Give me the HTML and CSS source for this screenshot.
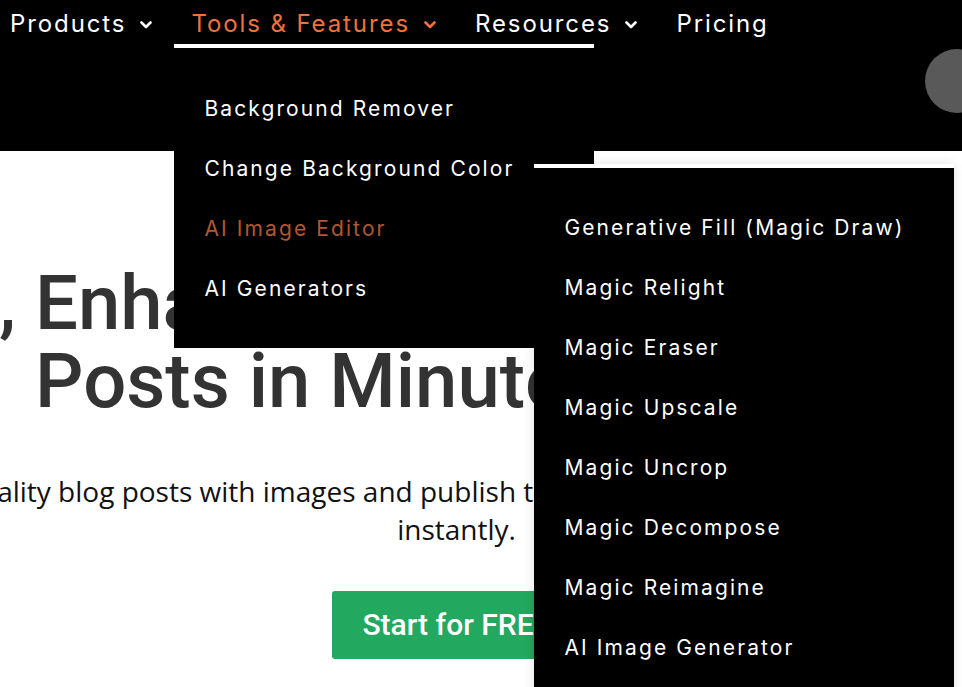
FILE: index.html
```html
<!DOCTYPE html>
<html lang="en">
<head>
<meta charset="utf-8">
<title>Blog posts in minutes</title>
<link rel="stylesheet" href="styles.css">
</head>
<body>
<header class="header">
  <nav class="nav">
    <div class="nav-item">
      <span class="nav-label">Products</span>
      <svg class="chev" viewBox="0 0 12 8" width="12" height="8"><polyline points="1.5,1.5 6,6 10.5,1.5"/></svg>
    </div>
    <div class="nav-item nav-item--active">
      <span class="nav-label">Tools &amp; Features</span>
      <svg class="chev" viewBox="0 0 12 8" width="12" height="8"><polyline points="1.5,1.5 6,6 10.5,1.5"/></svg>
      <ul class="dropdown">
        <li class="dd-item">Background Remover</li>
        <li class="dd-item">Change Background Color</li>
        <li class="dd-item dd-item--hover">AI Image Editor</li>
        <li class="dd-item">AI Generators</li>
        <li class="submenu-wrap">
          <ul class="submenu">
            <li class="dd-item">Generative Fill (Magic Draw)</li>
            <li class="dd-item">Magic Relight</li>
            <li class="dd-item">Magic Eraser</li>
            <li class="dd-item">Magic Upscale</li>
            <li class="dd-item">Magic Uncrop</li>
            <li class="dd-item">Magic Decompose</li>
            <li class="dd-item">Magic Reimagine</li>
            <li class="dd-item">AI Image Generator</li>
          </ul>
        </li>
      </ul>
    </div>
    <div class="nav-item">
      <span class="nav-label">Resources</span>
      <svg class="chev" viewBox="0 0 12 8" width="12" height="8"><polyline points="1.5,1.5 6,6 10.5,1.5"/></svg>
    </div>
    <div class="nav-item">
      <span class="nav-label">Pricing</span>
    </div>
  </nav>
  <div class="avatar"></div>
</header>
<main class="hero">
  <h1 class="title">
    <span class="title-line">Post, Enhance &amp; Publish Content for</span>
    <span class="title-line">Posts in Minutes with AI!</span>
  </h1>
  <p class="lead">
    <span class="lead-line">quality blog posts with images and publish them to your WordPress website</span>
    <span class="lead-line">instantly.</span>
  </p>
  <a class="cta" href="#">Start for FREE</a>
</main>
</body>
</html>
```
FILE: styles.css
```css
html, body {
  margin: 0;
  padding: 0;
}
body {
  width: 962px;
  height: 687px;
  overflow: hidden;
  background: #ffffff;
  font-family: "Inter", "Liberation Sans", sans-serif;
}
.header {
  height: 151px;
  background: #000000;
  display: flex;
  justify-content: space-between;
  align-items: flex-start;
  position: relative;
  z-index: 2;
}
.nav {
  display: flex;
  align-items: flex-start;
  padding-left: 10px;
}
.nav-item {
  position: relative;
  display: flex;
  align-items: center;
  gap: 14px;
  height: 48px;
  margin-right: 39px;
  color: #ffffff;
  font-size: 24px;
  letter-spacing: 1.9px;
  white-space: nowrap;
}
.nav-label {
  line-height: 48px;
}
.chev {
  fill: none;
  stroke: currentColor;
  stroke-width: 2.6;
  stroke-linecap: round;
  stroke-linejoin: round;
  margin-top: 1px;
}
.nav-item--active {
  color: #ee733a;
}
.dropdown {
  position: absolute;
  left: -17px;
  top: 44px;
  width: 420px;
  margin: 0;
  padding: 31px 0 29px;
  list-style: none;
  background: #000000;
  border-top: 4px solid #ffffff;
  box-sizing: border-box;
  letter-spacing: 0;
}
.dd-item {
  height: 60px;
  line-height: 60px;
  padding-left: 30px;
  color: #ffffff;
  font-size: 21px;
  letter-spacing: 2.1px;
}
.dd-item--hover {
  color: #b0582f;
}
.submenu-wrap {
  position: absolute;
  left: 360px;
  top: 116px;
}
.submenu {
  width: 420px;
  height: 560px;
  margin: 0;
  padding: 30px 0 0;
  list-style: none;
  background: #000000;
  border-top: 4px solid #ffffff;
  box-sizing: border-box;
  box-shadow: 0 0 10px rgba(0, 0, 0, 0.12);
}
.avatar {
  width: 64px;
  height: 64px;
  border-radius: 50%;
  background: #595959;
  margin-top: 49px;
  margin-right: -27px;
  flex: none;
}
.hero {
  width: 913px;
  display: flex;
  flex-direction: column;
  align-items: center;
}
.title {
  margin: 113px 0 0;
  display: flex;
  flex-direction: column;
  align-items: center;
  font-family: "Roboto", "Liberation Sans", sans-serif;
  font-weight: 500;
  font-size: 76px;
  line-height: 78px;
  color: #333333;
}
.title-line,
.lead-line {
  white-space: nowrap;
}
.lead {
  margin: 52px 0 0;
  display: flex;
  flex-direction: column;
  align-items: center;
  font-family: "Open Sans", "Liberation Sans", sans-serif;
  font-size: 28px;
  line-height: 38px;
  color: #111111;
}
.cta {
  margin-top: 43px;
  display: block;
  height: 68px;
  line-height: 68px;
  padding: 0 30px;
  background: #22a85f;
  border-radius: 3px;
  color: #ffffff;
  text-decoration: none;
  font-family: "Roboto", "Liberation Sans", sans-serif;
  font-weight: 500;
  font-size: 30px;
}
```
